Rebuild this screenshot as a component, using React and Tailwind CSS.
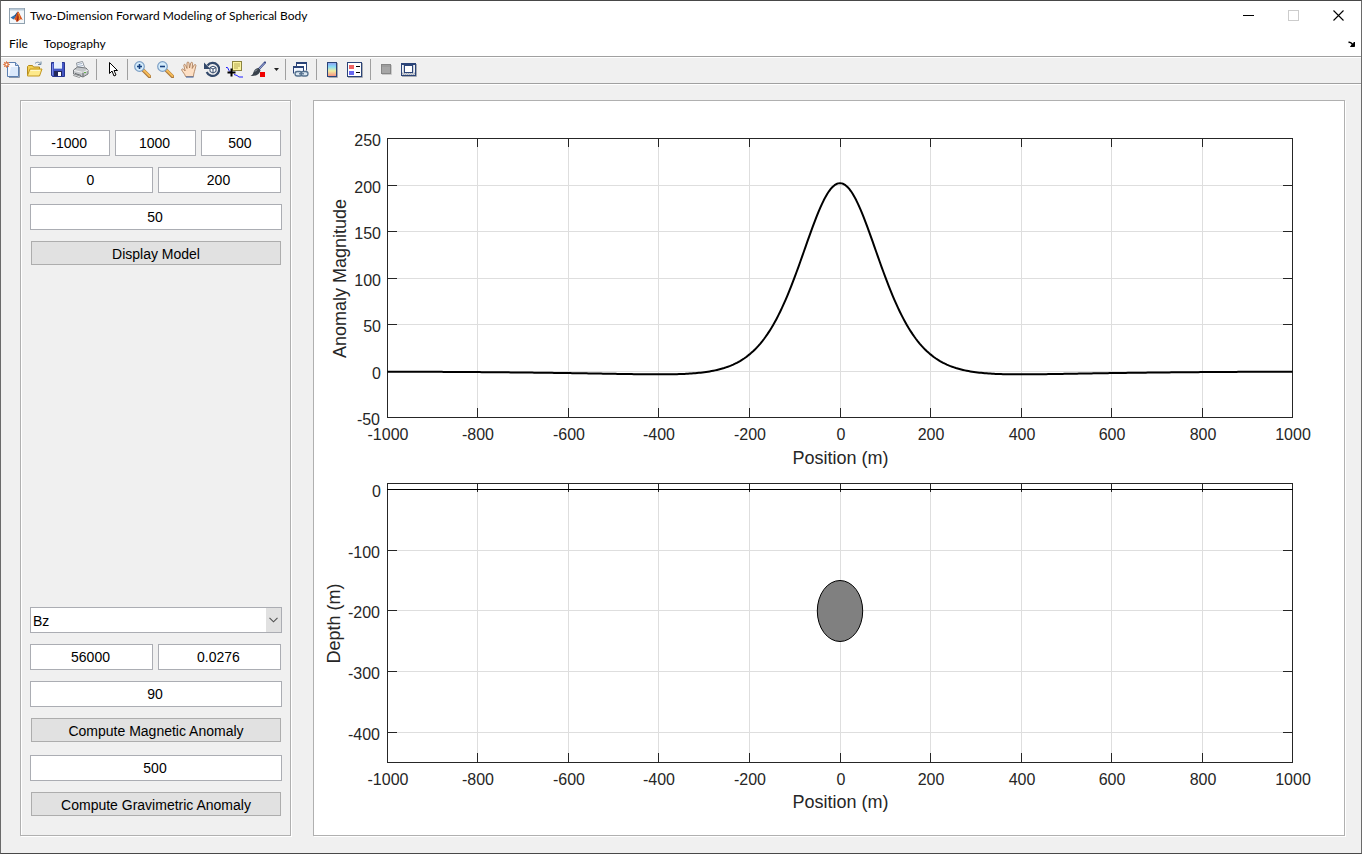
import React, { useState } from "react";

/* ---------- toolbar icons (17 x 17 grid) ---------- */

function Icon({ viewBox = "0 0 17 17", children }) {
  return (
    <svg width="17" height="17" viewBox={viewBox} aria-hidden="true">
      {children}
    </svg>
  );
}

const NewIcon = () => (
  <Icon>
    <path d="M4.5 1.5h8l3 3v11h-11z" fill="#f4f8ff" stroke="#5b7fb0" />
    <path d="M8 6h7v9H6z" fill="#dbe9fb" />
    <path d="M12.5 1.5v3h3" fill="#c9dcf5" stroke="#5b7fb0" />
    <path d="M16.5 6v10.500H6" fill="none" stroke="#8a97ab" />
    <path d="M3.500 0v7M0 3.500h7M1 1l5 5M6 1l-5 5" stroke="#e8956a" />
    <rect x="2" y="2" width="3" height="3" fill="#fff" stroke="#d9601f" />
  </Icon>
);

const OpenIcon = () => (
  <Icon>
    <path d="M9 2.500c2-2 4.500-1.500 5.500.5M12 3.500h3v-3" fill="none" stroke="#6f8aa5" />
    <path d="M1.500 14.500v-9l1-1h4l1 1.500h6v8.500z" fill="#f3cf52" stroke="#b48a1b" />
    <path d="M1.500 14.500l2.500-6.500h12l-2.500 7h-12z" fill="#fde98a" stroke="#c3971f" />
    <path d="M4.500 9.500h9.500" stroke="#fff7c9" />
  </Icon>
);

const SaveIcon = () => (
  <Icon viewBox="-1 0 17 17">
    <path d="M1.500 1.500h13v14h-12l-1-1z" fill="#4456c4" stroke="#27348f" />
    <rect x="4" y="1" width="8" height="7" fill="#e6eefc" />
    <path d="M4 7.500h8" stroke="#a9bbe6" />
    <rect x="4" y="10" width="8" height="5" fill="#23285a" />
    <rect x="8" y="11" width="3" height="4" fill="#fff" />
    <path d="M2.500 3v11" stroke="#7d8de8" />
  </Icon>
);

const PrintIcon = () => (
  <Icon>
    <path d="M5.500 7l-1-5 6-1.500 2 5.500" fill="#fbfcff" stroke="#8d949c" />
    <path d="M5.500 3.500l4.500-1M6 5.500l5-1" stroke="#9fb1c6" />
    <path d="M1.500 9l4-3 8.500 1 2 2v4l-5 3-9.500-3z" fill="#c4c7ca" stroke="#74787c" />
    <path d="M2 9.500l9 2 5-2.500" fill="none" stroke="#f2f2f2" />
    <path d="M11 11.500v4M3 12.500l6 2" stroke="#5e6265" />
    <path d="M2.500 13.500l6 1.500-1 1.500-6-2z" fill="#fff" stroke="#8f9294" />
    <rect x="12" y="11" width="2" height="1" fill="#5fae45" />
  </Icon>
);

const PointerIcon = () => (
  <Icon viewBox="-1 0 17 17">
    <path
      d="M5.500 1.500v11l2.500-2.500 2 5 2-1-2-4.500h3.500z"
      fill="#fff"
      stroke="#000"
    />
  </Icon>
);

function Lens({ plus }) {
  return (
    <Icon>
      <path d="M9.500 9.500l6 6" stroke="#a8763a" strokeWidth="3.500" strokeLinecap="round" />
      <path d="M10 9.500l5.500 5.500" stroke="#f5bb58" strokeWidth="2" strokeLinecap="round" />
      <circle cx="5.500" cy="5.500" r="4.800" fill="#d5ecfb" stroke="#7d9fc4" strokeWidth="1.200" />
      <path d="M3 5.500h5" stroke="#17407f" strokeWidth="1.600" />
      {plus && <path d="M5.500 3v5" stroke="#17407f" strokeWidth="1.600" />}
    </Icon>
  );
}

const HandIcon = () => (
  <Icon viewBox="-1 0 17 17">
    <path
      d="M4.500 15.500C4 13 1.500 11 .7 9c-.3-1 1-1.500 1.800-.7L4.200 10 2.800 4.500c-.2-1.300 1.300-1.600 1.800-.4L6 7.500 6 2c.1-1.300 1.800-1.300 2 0l.5 5L9.800 2c.4-1.200 1.900-.8 1.800.4L11.200 7.500 13.200 4c.7-1 2-.4 1.700.8-.7 3-1.400 5.500-1.900 7.200-.4 1.500-.5 2.500-.5 3.500z"
      fill="#fddfc4"
      stroke="#a5754f"
      strokeWidth=".8"
    />
    <path d="M5 16h7.500" stroke="#4f6fa8" strokeWidth="1.200" />
  </Icon>
);

const RotateIcon = () => (
  <Icon viewBox="-1 0 17 17">
    <path d="M3.500 4.500a6.500 6.500 0 1 1-.8 6.500" fill="none" stroke="#33496b" strokeWidth="2.200" />
    <path d="M0 1.500v6.500h6.500z" fill="#33496b" />
    <path d="M6 6.500l3-1.300 3 1.300v4l-3 1.500-3-1.500z" fill="#fff" stroke="#33496b" />
    <path d="M6 6.500l3 1.500 3-1.500M9 8v4" fill="none" stroke="#33496b" />
  </Icon>
);

const DataCursorIcon = () => (
  <Icon>
    <rect x="6.500" y=".5" width="9" height="9" fill="#fbf3a0" stroke="#8b8440" />
    <path d="M8 3h6M8 5h6M8 7h4" stroke="#b5aa55" />
    <path d="M0 6.500h1.500l1.500 3 2 2M8 13.500l3 1 2 1.500h4" fill="none" stroke="#2020ff" />
    <path d="M5.500 7.500v8M1.500 11.500h8" stroke="#000" strokeWidth="2" />
  </Icon>
);

const BrushIcon = () => (
  <Icon viewBox="-1 0 17 17">
    <path d="M15 1.500L8 9" stroke="#3b4a86" strokeWidth="2.200" strokeLinecap="round" />
    <path d="M14.500 2L8.500 8.500" stroke="#a5b2e0" />
    <path d="M8.500 7l2 2.200C10 13 6 15.500.5 15c2.500-1 2.500-3 3.500-5s3-3 4.500-3z" fill="#39424c" />
    <path d="M5 10.500l2-2" stroke="#a9b2bb" />
    <rect x="10" y="11" width="5" height="5" fill="#f00000" />
  </Icon>
);

const LinkPlotIcon = () => (
  <Icon>
    <path d="M4.500 7V1.500h10v8" fill="#fff" stroke="#2b4478" />
    <path d="M4 2h11" stroke="#2b4478" strokeWidth="2" />
    <path d="M1.500 12.500v-7h10v5" fill="#f2f7ff" stroke="#2b4478" />
    <path d="M1 6h11" stroke="#2b4478" strokeWidth="2" />
    <rect x="3" y="10.500" width="7" height="4.500" rx="2.200" fill="#dce8f2" stroke="#54708d" strokeWidth="1.300" />
    <rect x="9" y="10.500" width="7" height="4.500" rx="2.200" fill="#dce8f2" stroke="#54708d" strokeWidth="1.300" />
    <path d="M7 12.800h5" stroke="#54708d" strokeWidth="1.300" />
  </Icon>
);

const ColorbarIcon = () => (
  <Icon viewBox="-1 0 17 17">
    <defs>
      <linearGradient id="spectrum" x1="0" y1="0" x2="0" y2="1">
        <stop offset="0" stopColor="#8f9cf0" />
        <stop offset=".3" stopColor="#86dcf5" />
        <stop offset=".6" stopColor="#f0eda0" />
        <stop offset="1" stopColor="#f58b80" />
      </linearGradient>
    </defs>
    <path d="M13.500 2v14.500h-9" fill="none" stroke="#a7abb2" />
    <rect x="3.500" y="1.500" width="9" height="14" fill="url(#spectrum)" stroke="#2b4478" />
  </Icon>
);

const LegendIcon = () => (
  <Icon>
    <path d="M16.500 2v14.500H2" fill="none" stroke="#a7abb2" />
    <rect x="1.500" y="1.500" width="14" height="14" fill="#fff" stroke="#2b4478" />
    <rect x="3" y="4" width="5" height="4" fill="#f06464" />
    <rect x="3" y="10" width="5" height="4" fill="#6868f0" />
    <path d="M10 5.500h4M10 11.500h4" stroke="#000" />
  </Icon>
);

const HideToolsIcon = () => (
  <Icon viewBox="-1 0 17 17">
    <path d="M13.500 4v9.500H4" fill="none" stroke="#c9c9c9" />
    <rect x="3.500" y="3.500" width="9" height="9" fill="#a6a6a6" stroke="#868686" />
    <path d="M4 5h8" stroke="#929292" />
  </Icon>
);

const ShowToolsIcon = () => (
  <Icon>
    <path d="M16.500 3v12.500H2" fill="none" stroke="#a7abb2" />
    <rect x="1.500" y="2.500" width="14" height="12" fill="#cfd3da" stroke="#2b4478" />
    <path d="M1 3h15" stroke="#2b4478" strokeWidth="2" />
    <rect x="4.500" y="4.500" width="8" height="7" fill="#fff" stroke="#2b4478" />
    <path d="M2 12.500h13M3 13.500h12" stroke="#aab0bb" strokeDasharray="1 1" />
    <path d="M2.500 4v7M14.500 4v7" stroke="#eef1f6" />
  </Icon>
);

const MatlabIcon = () => (
  <svg width="16" height="16" viewBox="0 0 16 16" aria-hidden="true">
    <rect x=".5" y=".5" width="15" height="15" fill="#f3f7fa" stroke="#8fa0ae" />
    <path d="M1 1.500h14" stroke="#b8c8d6" strokeWidth="2" />
    <path d="M1.500 9.500l3.500-2 2 1.500-2.500 2.500z" fill="#2f6fb0" />
    <path d="M5 7.500C6.500 7 7.500 4 9 3.500L7 9z" fill="#1d4f86" />
    <path d="M4.500 11.500C7 10 7.500 5 9 3.500c1 0 3 6 5 8.500-2-1.500-3-.5-4 .5-1 1-1.500 1.500-2.500 1.300C7 12 6 11 4.500 11.500z" fill="#d8531d" />
    <path d="M9 3.500C8.500 6 9 9 7.500 13.800 10 13 9.700 7 9 3.500z" fill="#8c1e12" />
    <path d="M9.200 5c.8 2 1.600 4 1.500 6.500" fill="none" stroke="#f6a43a" />
  </svg>
);

/* ---------- toolbar ---------- */

function Tool({ label, children }) {
  return (
    <button type="button" aria-label={label} className="flex h-[21px] w-[23px] items-center pl-[2px]">
      {children}
    </button>
  );
}

const Separator = () => <div className="mr-1 ml-[3px] h-[21px] w-px bg-[#a0a0a0]" />;

function Toolbar() {
  return (
    <div className="border-b border-[#a0a0a0] bg-[#f0f0f0]">
      <div className="flex h-[26px] items-center border-t border-white pb-[2px]">
        <Tool label="New Figure"><NewIcon /></Tool>
        <Tool label="Open File"><OpenIcon /></Tool>
        <Tool label="Save Figure"><SaveIcon /></Tool>
        <Tool label="Print Figure"><PrintIcon /></Tool>
        <Separator />
        <Tool label="Edit Plot"><PointerIcon /></Tool>
        <Separator />
        <Tool label="Zoom In"><Lens plus /></Tool>
        <Tool label="Zoom Out"><Lens /></Tool>
        <Tool label="Pan"><HandIcon /></Tool>
        <Tool label="Rotate 3D"><RotateIcon /></Tool>
        <Tool label="Data Cursor"><DataCursorIcon /></Tool>
        <Tool label="Brush Data"><BrushIcon /></Tool>
        <button type="button" aria-label="Brush colours" className="flex h-[21px] w-3 items-center justify-center">
          <svg width="5" height="3" viewBox="0 0 5 3" aria-hidden="true">
            <path d="M0 0h5L2.500 3z" fill="#222" />
          </svg>
        </button>
        <Separator />
        <Tool label="Link Plot"><LinkPlotIcon /></Tool>
        <Separator />
        <Tool label="Insert Colorbar"><ColorbarIcon /></Tool>
        <Tool label="Insert Legend"><LegendIcon /></Tool>
        <Separator />
        <Tool label="Hide Plot Tools"><HideToolsIcon /></Tool>
        <Tool label="Show Plot Tools"><ShowToolsIcon /></Tool>
      </div>
    </div>
  );
}

/* ---------- window chrome ---------- */

function CaptionButton({ label, disabled, children }) {
  return (
    <button
      type="button"
      aria-label={label}
      disabled={disabled}
      className="flex h-[29px] w-[45px] items-center justify-center pr-px"
    >
      <svg width="11" height="11" viewBox="0 0 11 11" fill="none" aria-hidden="true">
        {children}
      </svg>
    </button>
  );
}

function TitleBar() {
  return (
    <header className="flex h-[31px] items-center justify-between bg-white pb-[2px]">
      <div className="flex items-center gap-[5px] pl-2">
        <MatlabIcon />
        <h1 className="text-xs">Two-Dimension Forward Modeling of Spherical Body</h1>
      </div>
      <div className="flex">
        <CaptionButton label="Minimize">
          <path d="M0 5.500h11" stroke="#000" />
        </CaptionButton>
        <CaptionButton label="Maximize" disabled>
          <rect x=".5" y=".5" width="10" height="10" stroke="#ccc" />
        </CaptionButton>
        <CaptionButton label="Close">
          <path d="M.5.5l10 10M10.500.5l-10 10" stroke="#000" strokeWidth="1.100" />
        </CaptionButton>
      </div>
    </header>
  );
}

function MenuBar() {
  return (
    <nav className="flex h-[25px] items-center justify-between border-b border-[#a0a0a0] bg-white pr-[5px] pl-2 text-xs">
      <div className="flex gap-4">
        <button type="button">File</button>
        <button type="button">Topography</button>
      </div>
      <button type="button" aria-label="Dock figure">
        <svg width="8" height="7" viewBox="0 0 8 7">
          <path d="M.5 1.500c2-1 3 .5 4.500 2.500" fill="none" stroke="#000" strokeWidth="1.600" />
          <path d="M6.500 1v4.500H2.500z" fill="#000" stroke="#000" />
        </svg>
      </button>
    </nav>
  );
}

/* ---------- control panel ---------- */

const PANEL =
  "border border-[#b0b0b0] shadow-[1px_1px_0_#fff,inset_1px_1px_0_#fff]";

function Field({ label, value }) {
  return (
    <input
      type="text"
      aria-label={label}
      defaultValue={value}
      className="h-[26px] w-full min-w-0 border border-[#abadb3] bg-white pr-[2px] text-center text-sm text-black outline-none"
    />
  );
}

function PushButton({ children }) {
  return (
    <button
      type="button"
      className="mx-px mb-[2px] flex h-6 items-center justify-center border border-[#adadad] bg-[#e1e1e1] pt-[2px] text-sm text-black"
    >
      {children}
    </button>
  );
}

function ControlPanel() {
  const [component, setComponent] = useState("Bz");
  return (
    <aside
      className={`${PANEL} flex w-[271px] shrink-0 flex-col justify-between pt-[29px] pr-2 pb-[17px] pl-[9px] font-['Liberation_Sans',Arial,sans-serif]`}
    >
      <div className="flex flex-col gap-[11px]">
        <div className="grid grid-cols-3 gap-[5px] pr-px">
          <Field label="Start position" value="-1000" />
          <Field label="End position" value="1000" />
          <Field label="Number of points" value="500" />
        </div>
        <div className="grid grid-cols-2 gap-[5px] pr-px">
          <Field label="Centre position" value="0" />
          <Field label="Centre depth" value="200" />
        </div>
        <Field label="Radius" value="50" />
        <PushButton>Display Model</PushButton>
      </div>
      <div className="flex flex-col gap-[11px]">
        <div className="relative">
          <select
            aria-label="Field component"
            value={component}
            onChange={(e) => setComponent(e.target.value)}
            className="block h-[26px] w-full appearance-none border border-[#abadb3] bg-white pt-[2px] pl-[2px] text-sm text-black outline-none"
          >
            <option>Bz</option>
            <option>Bx</option>
            <option>Bt</option>
          </select>
          <div className="pointer-events-none absolute top-px right-px flex h-6 w-[15px] items-center justify-center bg-[#e1e1e1] pr-px">
            <svg width="9" height="6" viewBox="0 0 9 6">
              <path d="M.5.8l4 4 4-4" fill="none" stroke="#505050" strokeWidth="1.100" />
            </svg>
          </div>
        </div>
        <div className="grid grid-cols-2 gap-[5px] pr-px">
          <Field label="Ambient field" value="56000" />
          <Field label="Susceptibility" value="0.0276" />
        </div>
        <Field label="Inclination" value="90" />
        <PushButton>Compute Magnetic Anomaly</PushButton>
        <Field label="Density contrast" value="500" />
        <PushButton>Compute Gravimetric Anomaly</PushButton>
      </div>
    </aside>
  );
}

/* ---------- plots ---------- */

const LEFT = 73;
const RIGHT = 978;
const TICK = 9;
const X_TICKS = [-1000, -800, -600, -400, -200, 0, 200, 400, 600, 800, 1000];
const px = (v) => Math.floor(LEFT + 0.1 + (v + 1000) * 0.4529);

function Axes({ label, height, top, bottom, yTicks, py, yLabel, yLabelX, xTickY, xLabelY, children }) {
  const mid = (top + bottom) / 2;
  return (
    <svg
      role="img"
      aria-label={label}
      viewBox={`0 0 1030 ${height}`}
      className="block h-auto w-full font-['Liberation_Sans',Arial,sans-serif]"
      fill="#262626"
    >
      <g stroke="#dedede" shapeRendering="crispEdges">
        {X_TICKS.slice(1, -1).map((v) => (
          <path key={v} d={`M${px(v) + 0.5} ${top}V${bottom}`} />
        ))}
        {yTicks.map((v) => (
          <path key={v} d={`M${LEFT} ${py(v) + 0.5}H${RIGHT}`} />
        ))}
      </g>
      <g stroke="#262626" fill="none" shapeRendering="crispEdges">
        <rect x={LEFT + 0.5} y={top + 0.5} width={RIGHT - LEFT} height={bottom - top} />
        {X_TICKS.slice(1, -1).map((v) => (
          <path key={v} d={`M${px(v) + 0.5} ${top}v${TICK}M${px(v) + 0.5} ${bottom}v-${TICK}`} />
        ))}
        {yTicks.map((v) => (
          <path key={v} d={`M${LEFT} ${py(v) + 0.5}h${TICK + 1}M${RIGHT + 1} ${py(v) + 0.5}h-${TICK + 1}`} />
        ))}
      </g>
      {children}
      <g className="text-base" textAnchor="end">
        {yTicks.map((v) => (
          <text key={v} x={LEFT - (v < 0 ? 7 : 6)} y={py(v) + 8}>{v}</text>
        ))}
      </g>
      <g className="text-base" textAnchor="middle">
        {X_TICKS.map((v) => (
          <text key={v} x={px(v) + 1} y={xTickY}>{v}</text>
        ))}
      </g>
      <g className="text-lg" textAnchor="middle">
        <text x={(LEFT + RIGHT) / 2 + 1} y={xLabelY}>Position (m)</text>
        <text transform={`translate(${yLabelX} ${mid + 1}) rotate(-90)`}>{yLabel}</text>
      </g>
    </svg>
  );
}

// Vertical field of a uniformly magnetised sphere centred at the given depth.
const DEPTH = 200;
const PEAK = 202;
const anomaly = (x) => {
  const z2 = DEPTH * DEPTH;
  return ((PEAK * Math.pow(DEPTH, 3)) / 2) * ((2 * z2 - x * x) / Math.pow(x * x + z2, 2.5));
};

const curve = Array.from({ length: 501 }, (_, i) => {
  const x = -1000 + i * 4;
  const sx = LEFT + 0.5 + ((x + 1000) * (RIGHT - LEFT)) / 2000;
  const sy = 37.5 + (250 - anomaly(x)) * 0.93;
  return `${sx.toFixed(2)},${sy.toFixed(2)}`;
}).join(" ");

function Plots() {
  return (
    <main className={`${PANEL} min-w-0 flex-1 bg-white`}>
      <Axes
        label="Anomaly magnitude against position"
        height={372}
        top={37}
        bottom={316}
        yTicks={[250, 200, 150, 100, 50, 0, -50]}
        py={(v) => Math.round(37 + (250 - v) * 0.93)}
        yLabel="Anomaly Magnitude"
        yLabelX={32}
        xTickY={339}
        xLabelY={363}
      >
        <polyline points={curve} fill="none" stroke="#000" strokeWidth="2" strokeLinejoin="round" />
      </Axes>
      <Axes
        label="Depth section of the model"
        height={362}
        top={10}
        bottom={289}
        yTicks={[0, -100, -200, -300, -400]}
        py={(v) => Math.round(10 + ((10 - v) * 279) / 460)}
        yLabel="Depth (m)"
        yLabelX={26}
        xTickY={312}
        xLabelY={335}
      >
        <path d={`M${LEFT} 16.5H${RIGHT + 1}`} stroke="#000" shapeRendering="crispEdges" />
        <ellipse cx="526" cy="138" rx="22.700" ry="30.500" fill="#808080" stroke="#000" />
      </Axes>
    </main>
  );
}

export default function App() {
  return (
    <div className="flex min-h-screen flex-col border border-t-[#484848] border-r-[#6a6a6a] border-b-[#484848] border-l-[#6a6a6a] bg-[#f0f0f0] font-['Segoe_UI',Lato,sans-serif] text-black">
      <TitleBar />
      <MenuBar />
      <Toolbar />
      <div className="flex flex-1 gap-[22px] border-t border-white pt-[15px] pr-4 pb-[17px] pl-[19px]">
        <ControlPanel />
        <Plots />
      </div>
    </div>
  );
}
